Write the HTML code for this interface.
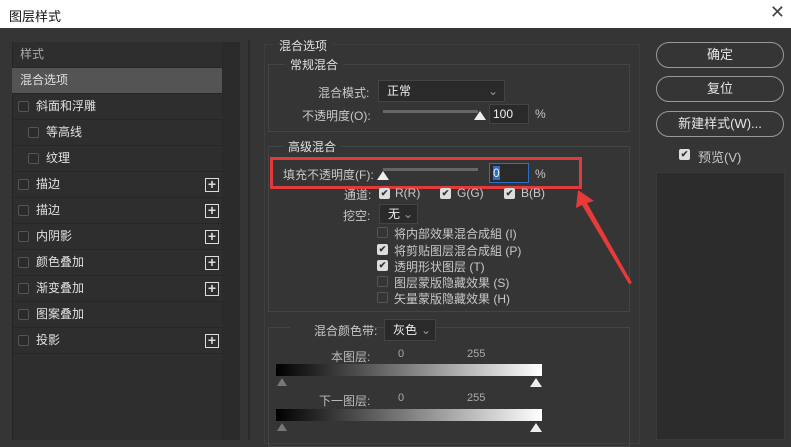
<!DOCTYPE html>
<html><head><meta charset="utf-8"><style>
*{margin:0;padding:0;box-sizing:border-box}
body{width:791px;height:440px;overflow:hidden;background:#353535;font-family:"Liberation Sans","Noto Sans CJK SC",sans-serif;font-size:12px;color:#c8c8c8;position:relative}
.a{position:absolute}
.title{left:0;top:0;width:791px;height:28px;background:#fff;color:#111;font-size:13px;padding:6px 0 0 9px}
.x{right:6px;top:2px;font-size:18px;color:#444;font-weight:300}
.list{left:12px;top:42px;width:228px;height:398px;background:#2e2e2e;border-left:1px solid #262626}
.sb{left:222px;top:42px;width:18px;height:398px;background:#2a2a2a}
.row{position:absolute;left:0;width:210px;height:26px;border-bottom:1px solid #262626;line-height:25px;color:#e0e0e0;font-size:12px}
.cb{position:absolute;width:11px;height:11px;border:1px solid #555;border-radius:2px;background:#2b2b2b;top:7px}
.plus{position:absolute;left:193px;top:6px;width:14px;height:14px;border:1.5px solid #ddd;color:#ddd;font-size:14px;line-height:11px;text-align:center;font-weight:bold}
.grp{border:1px solid #444;position:absolute}
.lbl{position:absolute;background:#353535;padding:0 5px;color:#e0e0e0}
.btn{position:absolute;left:656px;width:128px;height:26px;border:1.5px solid #999;border-radius:13px;text-align:center;line-height:23px;color:#e6e6e6;font-size:13px}
.ck{position:absolute;width:11px;height:11px;background:#ddd;border-radius:2px;color:#333;font-size:9px;line-height:11px;text-align:center;font-weight:bold}
.uk{position:absolute;width:11px;height:11px;border:1px solid #555;border-radius:2px}
.sel{position:absolute;background:#2a2a2a;border:1px solid #444;color:#eee;padding-left:8px;line-height:20px}
.grad{position:absolute;left:276px;width:266px;height:12px;background:linear-gradient(90deg,#000,#fff)}
</style></head><body>
<div class="a title">图层样式</div><div class="a x">✕</div>
<div class="a list"></div><div class="a sb"></div>
<div class="a" style="left:12px;top:42px;width:210px">
<div class="row" style="top:0;padding-left:8px;color:#aaa">样式</div>
<div class="row" style="top:26px;padding-left:8px;background:#545454">混合选项</div>
<div class="row" style="top:52px;padding-left:24px"><span class="cb" style="left:6px"></span>斜面和浮雕</div>
<div class="row" style="top:78px;padding-left:34px"><span class="cb" style="left:16px"></span>等高线</div>
<div class="row" style="top:104px;padding-left:34px"><span class="cb" style="left:16px"></span>纹理</div>
<div class="row" style="top:130px;padding-left:24px"><span class="cb" style="left:6px"></span>描边<span class="plus">+</span></div>
<div class="row" style="top:156px;padding-left:24px"><span class="cb" style="left:6px"></span>描边<span class="plus">+</span></div>
<div class="row" style="top:182px;padding-left:24px"><span class="cb" style="left:6px"></span>内阴影<span class="plus">+</span></div>
<div class="row" style="top:208px;padding-left:24px"><span class="cb" style="left:6px"></span>颜色叠加<span class="plus">+</span></div>
<div class="row" style="top:234px;padding-left:24px"><span class="cb" style="left:6px"></span>渐变叠加<span class="plus">+</span></div>
<div class="row" style="top:260px;padding-left:24px"><span class="cb" style="left:6px"></span>图案叠加</div>
<div class="row" style="top:286px;padding-left:24px"><span class="cb" style="left:6px"></span>投影<span class="plus">+</span></div>
</div>
<div class="a" style="left:248px;top:40px;width:2px;height:400px;background:#2a2a2a"></div>
<div class="grp" style="left:264px;top:44px;width:376px;height:400px;border-color:#3e3e3e"></div>
<div class="lbl" style="left:274px;top:37px">混合选项</div>
<div class="grp" style="left:268px;top:64px;width:362px;height:68px"></div>
<div class="lbl" style="left:285px;top:56px">常规混合</div>
<div class="a" style="left:318px;top:84px">混合模式:</div>
<div class="sel" style="left:378px;top:80px;width:127px;height:22px">正常<span style="position:absolute;right:6px;color:#999">⌄</span></div>
<div class="a" style="left:302px;top:107px">不透明度(O):</div>
<div class="a" style="left:383px;top:110px;width:95px;height:3px;background:#666"></div>
<div class="a" style="left:474px;top:111px;width:0;height:0;border-left:6px solid transparent;border-right:6px solid transparent;border-bottom:9px solid #eee"></div>
<div class="a" style="left:489px;top:104px;width:40px;height:20px;background:#2a2a2a;border:1px solid #444;padding-left:3px;line-height:18px;color:#eee">100</div>
<div class="a" style="left:535px;top:107px">%</div>
<div class="grp" style="left:268px;top:146px;width:362px;height:166px"></div>
<div class="lbl" style="left:283px;top:138px">高级混合</div>
<div class="a" style="left:283px;top:166px">填充不透明度(F):</div>
<div class="a" style="left:383px;top:168px;width:95px;height:3px;background:#666"></div>
<div class="a" style="left:377px;top:171px;width:0;height:0;border-left:6px solid transparent;border-right:6px solid transparent;border-bottom:9px solid #eee"></div>
<div class="a" style="left:489px;top:163px;width:40px;height:20px;background:#2a2a2a;border:1px solid #2a6fc9;padding-left:3px;line-height:18px;color:#eee"><span style="background:#2a6fc9">0</span></div>
<div class="a" style="left:535px;top:167px">%</div>
<div class="a" style="left:270px;top:157px;width:312px;height:32px;border:3px solid #e23a3a"></div>
<div class="a" style="left:344px;top:186px">通道:</div>
<div class="ck" style="left:379px;top:188px">✔</div><div class="a" style="left:395px;top:186px">R(R)</div>
<div class="ck" style="left:440px;top:188px">✔</div><div class="a" style="left:457px;top:186px">G(G)</div>
<div class="ck" style="left:504px;top:188px">✔</div><div class="a" style="left:521px;top:186px">B(B)</div>
<div class="a" style="left:343px;top:207px">挖空:</div>
<div class="sel" style="left:379px;top:204px;width:39px;height:20px;line-height:18px">无<span style="position:absolute;right:4px;color:#999">⌄</span></div>
<div class="uk" style="left:377px;top:227px"></div><div class="a" style="left:394px;top:225px">将内部效果混合成組 (I)</div>
<div class="ck" style="left:377px;top:244px">✔</div><div class="a" style="left:394px;top:242px">将剪贴图层混合成組 (P)</div>
<div class="ck" style="left:377px;top:260px">✔</div><div class="a" style="left:394px;top:258px">透明形状图层 (T)</div>
<div class="uk" style="left:377px;top:276px"></div><div class="a" style="left:394px;top:274px">图层蒙版隐藏效果 (S)</div>
<div class="uk" style="left:377px;top:292px"></div><div class="a" style="left:394px;top:290px">矢量蒙版隐藏效果 (H)</div>
<div class="grp" style="left:268px;top:327px;width:362px;height:120px"></div>
<div class="a" style="left:290px;top:320px;width:80px;height:14px;background:#353535"></div>
<div class="a" style="left:314px;top:322px">混合颜色带:</div>
<div class="sel" style="left:384px;top:319px;width:52px;height:22px">灰色<span style="position:absolute;right:4px;color:#999">⌄</span></div>
<div class="a" style="left:331px;top:348px;color:#bbb">本图层:</div>
<div class="a" style="left:398px;top:348px;color:#aaa;font-size:11px">0</div>
<div class="a" style="left:467px;top:348px;color:#aaa;font-size:11px">255</div>
<div class="grad" style="top:364px"></div>
<div class="a" style="left:277px;top:378px;border-left:5px solid transparent;border-right:5px solid transparent;border-bottom:8px solid #777"></div>
<div class="a" style="left:530px;top:378px;border-left:6px solid transparent;border-right:6px solid transparent;border-bottom:9px solid #eee"></div>
<div class="a" style="left:319px;top:392px;color:#bbb">下一图层:</div>
<div class="a" style="left:398px;top:392px;color:#aaa;font-size:11px">0</div>
<div class="a" style="left:467px;top:392px;color:#aaa;font-size:11px">255</div>
<div class="grad" style="top:409px"></div>
<div class="a" style="left:277px;top:423px;border-left:5px solid transparent;border-right:5px solid transparent;border-bottom:8px solid #777"></div>
<div class="a" style="left:530px;top:423px;border-left:6px solid transparent;border-right:6px solid transparent;border-bottom:9px solid #eee"></div>
<svg class="a" style="left:0;top:0" width="791" height="440"><polygon points="578,190 594,201 587,203 632,283 629,284 582,205 576,208" fill="#e83a3a"/></svg>
<div class="btn" style="top:42px">确定</div>
<div class="btn" style="top:76px">复位</div>
<div class="btn" style="top:111px">新建样式(W)...</div>
<div class="ck" style="left:679px;top:149px">✔</div><div class="a" style="left:698px;top:147px;font-size:13px">预览(V)</div>
<div class="a" style="left:656px;top:172px;width:129px;height:268px;background:#2c2c2c;border:1px solid #3a3a3a"></div>
</body></html>
